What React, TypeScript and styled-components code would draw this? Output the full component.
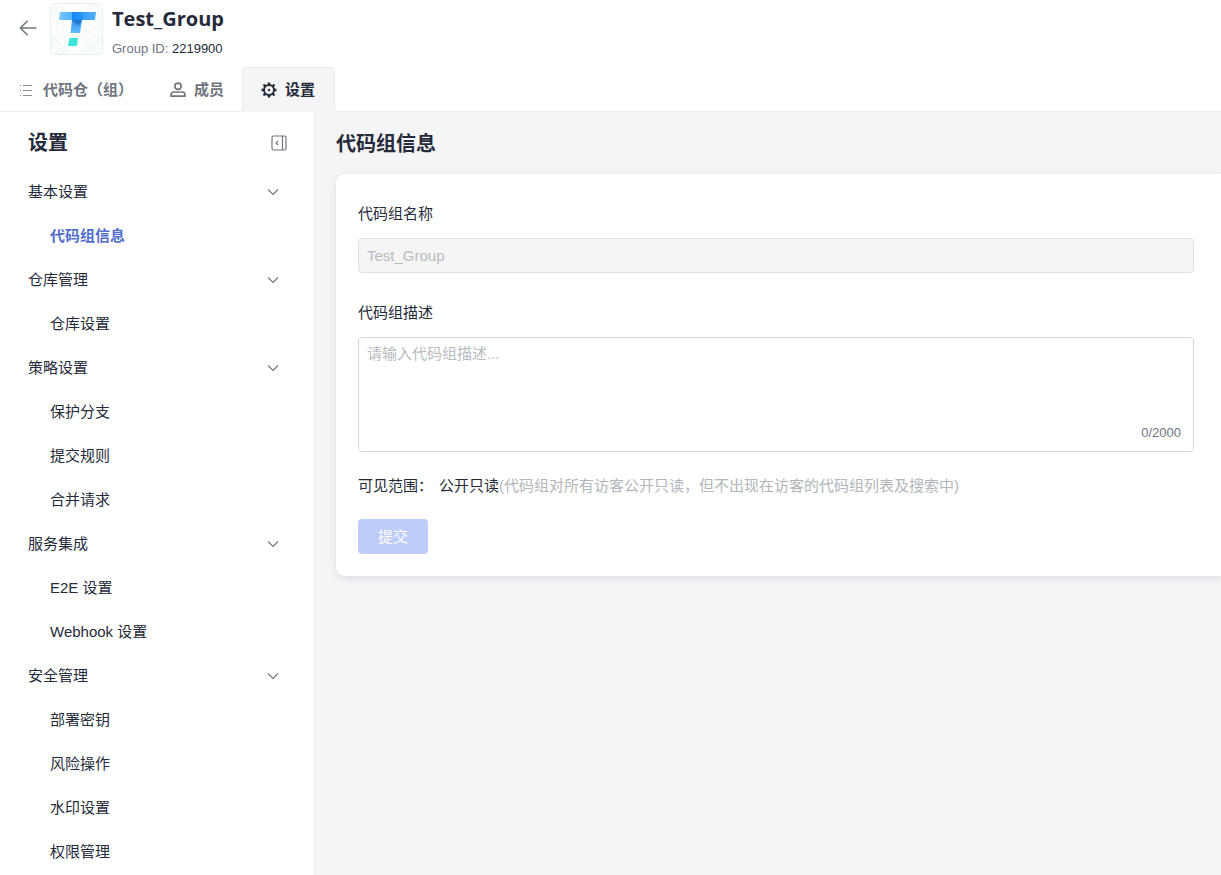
import React, { useState } from "react";
import styled, { createGlobalStyle } from "styled-components";

const GlobalStyle = createGlobalStyle`
  *, *::before, *::after { box-sizing: border-box; }
  html { background: #f5f5f8; }
  body {
    margin: 0;
    color: #252b3a;
    font: 15px/20px "Liberation Sans", "Noto Sans CJK SC", sans-serif;
  }
  a { color: inherit; text-decoration: none; }
  button, input, textarea { font: inherit; }
  h1, h2, p, ul { margin: 0; padding: 0; }
  ul { list-style: none; }
`;

const Page = styled.div`
  display: flex;
  flex-direction: column;
  min-height: 100vh;
`;

const Header = styled.header`
  background: #fff;
  border-bottom: 1px solid #ebebf0;
`;

const GroupBar = styled.div`
  display: flex;
  align-items: flex-start;
  padding: 3px 18px 0;
  height: 67px;
`;

const IconButton = styled.button`
  display: flex;
  padding: 0;
  border: 0;
  background: none;
  color: #71757f;
  cursor: pointer;
`;

const BackButton = styled(IconButton)`
  margin: 15px 12px 0 0;
`;

const GroupText = styled.div`
  margin-left: 9px;
`;

const GroupName = styled.h1`
  font: 700 20px/32px "Open Sans", "Noto Sans", sans-serif;
`;

const GroupId = styled.p`
  padding-top: 4px;
  color: #71757f;
  font-size: 13px;

  span { color: #252b3a; }
`;

const Tabs = styled.nav`
  display: flex;
  height: 45px;
  margin-bottom: -1px;
`;

const Tab = styled.a<{ $active?: boolean }>`
  display: flex;
  align-items: center;
  gap: 8px;
  padding: 0 ${(p) => (p.$active ? 19 : 17)}px 0 18px;
  border: 1px solid ${(p) => (p.$active ? "#ebebf0" : "transparent")};
  border-bottom: 0;
  border-radius: 4px 4px 0 0;
  background: ${(p) => (p.$active ? "#f5f5f8" : "none")};
  color: ${(p) => (p.$active ? "#252b3a" : "#71757f")};
  font-weight: 700;
`;

const Body = styled.div`
  display: flex;
  flex: 1;
`;

const Sidebar = styled.aside`
  flex: 0 0 315px;
  border-right: 1px solid #ebebf0;
  background: #fff;
`;

const SidebarHead = styled.div`
  display: flex;
  align-items: center;
  justify-content: space-between;
  height: 58px;
  padding: 4px 27px 0 28px;
`;

const Heading = styled.h2`
  font-size: 20px;
  line-height: 28px;
`;

const SectionButton = styled.button`
  display: flex;
  align-items: center;
  justify-content: space-between;
  width: 100%;
  height: 44px;
  padding: 0 35px 0 28px;
  border: 0;
  background: none;
  color: #252b3a;
  text-align: left;
  cursor: pointer;
`;

const MenuLink = styled.a<{ $active?: boolean }>`
  display: flex;
  align-items: center;
  height: 44px;
  padding-left: 50px;
  color: ${(p) => (p.$active ? "#526ecc" : "#252b3a")};
  font-weight: ${(p) => (p.$active ? 700 : 400)};
`;

const Main = styled.main`
  flex: 1;
  min-width: 0;
  padding: 18px 0 24px 21px;
`;

const Card = styled.form`
  margin-top: 16px;
  padding: 30px 27px 22px 22px;
  border-radius: 9px 0 0 9px;
  background: #fff;
  box-shadow: 0 2px 8px rgba(37, 43, 58, 0.12);
`;

const Field = styled.div`
  margin-bottom: 30px;
`;

const Label = styled.label`
  display: block;
  margin-bottom: 14px;
`;

const TextInput = styled.input`
  display: block;
  width: 100%;
  height: 35px;
  padding: 0 8px;
  border: 1px solid #dfe1e6;
  border-radius: 4px;
  background: #f5f5f5;
  color: #b8bbc2;
`;

const AreaBox = styled.div`
  height: 115px;
  display: flex;
  flex-direction: column;
  border: 1px solid #d7d8da;
  border-radius: 4px;
`;

const TextArea = styled.textarea`
  flex: 1;
  width: 100%;
  padding: 6px 8px;
  border: 0;
  outline: 0;
  background: none;
  color: #252b3a;
  resize: none;

  &::placeholder { color: #babbc0; }
`;

const Counter = styled.span`
  padding: 0 12px 8px;
  color: #71757f;
  font-size: 13px;
  text-align: right;
`;

const Visibility = styled.p`
  display: flex;
  margin: -6px 0 23px;
`;

const VisibilityLabel = styled.span`
  width: 81px;
`;

const Hint = styled.span`
  color: #b3b5ba;
`;

const SubmitButton = styled.button`
  display: block;
  width: 70px;
  height: 35px;
  padding: 0;
  border: 0;
  border-radius: 4px;
  background: #beccfa;
  color: #fff;
`;

const BackIcon = () => (
  <svg width="20" height="20" viewBox="0 0 20 20" fill="none" stroke="currentColor" strokeWidth="1.5">
    <path d="M18.300 10H2.600M9.600 2.800 2.400 10l7.200 7.200" />
  </svg>
);

const GroupLogo = () => (
  <svg width="53" height="53" viewBox="0 0 53 53" role="img" aria-label="Test_Group">
    <defs>
      <linearGradient id="bar" x1="0" x2="1">
        <stop offset="0" stopColor="#76c8fc" />
        <stop offset=".35" stopColor="#4fb1fc" />
        <stop offset=".36" stopColor="#1687f5" />
        <stop offset=".64" stopColor="#2795fb" />
        <stop offset=".66" stopColor="#38a0fd" />
        <stop offset="1" stopColor="#50adfc" />
      </linearGradient>
      <linearGradient id="stem" x1="0" y1="0" x2="0" y2="1">
        <stop offset="0" stopColor="#2a86e0" />
        <stop offset=".4" stopColor="#4aa5f5" />
        <stop offset="1" stopColor="#62bbfb" />
      </linearGradient>
      <clipPath id="tile"><rect x="1" y="1" width="51" height="50" rx="4" /></clipPath>
    </defs>
    <rect x=".5" y=".5" width="52" height="51" rx="4" fill="#fcfefe" stroke="#e4f0f1" />
    <g clipPath="url(#tile)" fill="none" stroke="#f1f6f7" strokeWidth="1.200">
      <path d="M-2 10 10-2M-2 15 15-2M-2 20 20-2M-2 28l10-10v14l-10 10M-2 47l15-15V18M3 53l15-15v-8M9 53l12-12M40-2l14 14M35-2l20 20M30 0l24 24M54 30 40 16M54 36 38 20M54 42 36 24v12l18 18M36 42l12 12M36 48l6 6M0 32l20 20M0 37l16 16M0 42l11 11M32 54l20-20M27 54l12-12" />
    </g>
    <path d="M10 9h36l-1 8H9z" fill="url(#bar)" />
    <path d="M22 17h10l-2 13H20.500z" fill="url(#stem)" />
    <path d="M22.500 17H32l-4 6z" fill="#1263b8" opacity=".55" />
    <path d="M19.500 35H28l-1 8h-9z" fill="#3be6d9" />
  </svg>
);

const ListIcon = () => (
  <svg width="16" height="16" viewBox="0 0 16 16" fill="none" stroke="#8a8e99">
    <path d="M1 3.500h1M4 3.500h9M1 8.500h1M4 8.500h9M1 13.500h1M4 13.500h9" />
  </svg>
);

const MemberIcon = () => (
  <svg width="16" height="16" viewBox="0 0 16 16" fill="none" stroke="currentColor" strokeWidth="1.700">
    <circle cx="8" cy="4.300" r="3.100" />
    <path d="M1 14.200v-1.200A3 3 0 0 1 4 10h8a3 3 0 0 1 3 3v1.200z" strokeLinejoin="round" />
  </svg>
);

const GearIcon = () => (
  <svg width="16" height="16" viewBox="0 0 16 16" fill="none" stroke="currentColor">
    <circle cx="8" cy="8" r="5" strokeWidth="2" />
    <path
      d="M8 3V.5M8 13v2.500M3 8H.5M13 8h2.500M4.500 4.500 2.500 2.500M11.500 4.500l2-2M4.500 11.500l-2 2M11.500 11.500l2 2"
      strokeWidth="2.400"
    />
    <circle cx="8" cy="8" r="1.200" fill="currentColor" stroke="none" />
  </svg>
);

const CollapseIcon = () => (
  <svg width="16" height="16" viewBox="0 0 16 16" fill="none" stroke="currentColor">
    <rect x="1" y="1" width="14" height="14" rx="1.500" strokeWidth="1.200" />
    <path d="M11.500 1v14M7 6 5 8l2 2" strokeWidth="1.200" />
  </svg>
);

const ChevronIcon = () => (
  <svg width="12" height="12" viewBox="0 0 12 12" fill="none" stroke="#71757f" strokeWidth="1.100">
    <path d="m1 3.500 5 5 5-5" />
  </svg>
);

const sections = [
  { title: "基本设置", items: ["代码组信息"] },
  { title: "仓库管理", items: ["仓库设置"] },
  { title: "策略设置", items: ["保护分支", "提交规则", "合并请求"] },
  { title: "服务集成", items: ["E2E 设置", "Webhook 设置"] },
  { title: "安全管理", items: ["部署密钥", "风险操作", "水印设置", "权限管理"] },
];

function MenuSection({ title, items }: { title: string; items: string[] }) {
  const [open, setOpen] = useState(true);
  return (
    <li>
      <SectionButton type="button" aria-expanded={open} onClick={() => setOpen(!open)}>
        {title}
        <ChevronIcon />
      </SectionButton>
      {open && (
        <ul>
          {items.map((item) => (
            <li key={item}>
              <MenuLink href="#" $active={item === "代码组信息"}>{item}</MenuLink>
            </li>
          ))}
        </ul>
      )}
    </li>
  );
}

export default function App() {
  const [description, setDescription] = useState("");
  return (
    <Page>
      <GlobalStyle />
      <Header>
        <GroupBar>
          <BackButton type="button" aria-label="返回"><BackIcon /></BackButton>
          <GroupLogo />
          <GroupText>
            <GroupName>Test_Group</GroupName>
            <GroupId>Group ID: <span>2219900</span></GroupId>
          </GroupText>
        </GroupBar>
        <Tabs>
          <Tab href="#"><ListIcon />代码仓（组）</Tab>
          <Tab href="#"><MemberIcon />成员</Tab>
          <Tab href="#" $active><GearIcon />设置</Tab>
        </Tabs>
      </Header>
      <Body>
        <Sidebar>
          <SidebarHead>
            <Heading>设置</Heading>
            <IconButton type="button" aria-label="收起"><CollapseIcon /></IconButton>
          </SidebarHead>
          <ul>
            {sections.map((section) => <MenuSection key={section.title} {...section} />)}
          </ul>
        </Sidebar>
        <Main>
          <Heading>代码组信息</Heading>
          <Card onSubmit={(e) => e.preventDefault()}>
            <Field>
              <Label htmlFor="name">代码组名称</Label>
              <TextInput id="name" value="Test_Group" disabled readOnly />
            </Field>
            <Field>
              <Label htmlFor="description">代码组描述</Label>
              <AreaBox>
                <TextArea
                  id="description"
                  placeholder="请输入代码组描述..."
                  maxLength={2000}
                  value={description}
                  onChange={(e) => setDescription(e.target.value)}
                />
                <Counter>{description.length}/2000</Counter>
              </AreaBox>
            </Field>
            <Visibility>
              <VisibilityLabel>可见范围：</VisibilityLabel>
              <span>公开只读</span>
              <Hint>(代码组对所有访客公开只读，但不出现在访客的代码组列表及搜索中)</Hint>
            </Visibility>
            <SubmitButton type="submit" disabled>提交</SubmitButton>
          </Card>
        </Main>
      </Body>
    </Page>
  );
}
